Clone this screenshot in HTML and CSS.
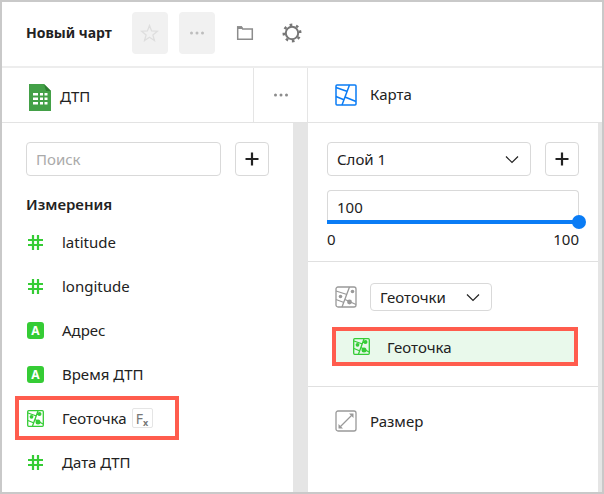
FILE: index.html
```html
<!DOCTYPE html>
<html lang="ru">
<head>
<meta charset="utf-8">
<meta name="viewport" content="width=device-width, initial-scale=1">
<title>Новый чарт</title>
<link rel="stylesheet" href="styles.css">
</head>
<body>
<svg class="defs" aria-hidden="true">
  <symbol id="hash" viewBox="0 0 17 17"><path d="M6 1v15M11 1v15M1 6h15M1 11h15" fill="none" stroke="currentColor" stroke-width="2.200"/></symbol>
  <symbol id="plus" viewBox="0 0 14 14"><path d="M7 .5v13M.5 7h13" stroke="currentColor" stroke-width="2.200"/></symbol>
  <symbol id="chevron" viewBox="0 0 14 9"><path d="M1 1.500l6 6 6-6" fill="none" stroke="currentColor" stroke-width="1.200"/></symbol>
  <symbol id="dots" viewBox="0 0 16 4"><g fill="currentColor"><circle cx="2.500" cy="2" r="1.500"/><circle cx="8" cy="2" r="1.500"/><circle cx="13.500" cy="2" r="1.500"/></g></symbol>
  <symbol id="map" viewBox="0 0 22 22"><g fill="none" stroke="currentColor" stroke-width="1.500"><rect x="1" y="1" width="20" height="20" rx="1"/><path d="M14.500 1L7 21M1 3.500l11.500 4M1 12.500l8.500 3.500M10 13l11 4.500"/></g></symbol>
  <symbol id="geo" viewBox="0 0 22 22"><g fill="none" stroke="currentColor" stroke-width="1.300"><rect x="1" y="1" width="20" height="20" rx="2"/><path d="M14.500 1L7 21M1 5l11 3.500M1 13.500l8 3M10 13.500l11 5"/></g><g fill="currentColor"><circle cx="5.500" cy="10.500" r="1.800"/><circle cx="17.500" cy="5.500" r="1.800"/><circle cx="14.500" cy="16" r="2.400"/></g></symbol>
  <symbol id="geo-small" viewBox="0 0 17 17"><g fill="none" stroke="currentColor" stroke-width="1.300"><rect x=".7" y=".7" width="15.600" height="15.600" rx="1"/><path d="M11 1L5.500 16M1 3l8.500 3M1 10.500l6 2.500M8 9.500l8 4.500M10 4l2 1"/></g><g fill="currentColor"><circle cx="4.500" cy="6.800" r="1.900"/><circle cx="12.500" cy="4" r="2"/><circle cx="11" cy="12" r="2.500"/></g></symbol>
</svg>
<div class="app">
  <header class="topbar">
    <h1 class="title">Новый чарт</h1>
    <button class="tile star" type="button" aria-label="В избранное" disabled><svg width="19" height="18" viewBox="0 0 19 18"><path d="M9.500 1.500l2.100 5.400 5.700.3-4.400 3.700 1.500 5.600-4.900-3.200-4.900 3.200 1.500-5.600-4.400-3.700 5.700-.3z" fill="none" stroke="currentColor" stroke-width="1.300"/></svg></button>
    <button class="tile more" type="button" aria-label="Ещё" disabled><svg width="16" height="4"><use href="#dots"/></svg></button>
    <button class="tool folder" type="button" aria-label="Открыть"><svg width="18" height="16" viewBox="0 0 18 16"><path d="M1.700 14.300V2h3.800l1.200 2h9.600v10.300z" fill="none" stroke="currentColor" stroke-width="1.500"/><path d="M1 1.200h4.800l1 2.800H1z" fill="currentColor"/></svg></button>
    <button class="tool gear" type="button" aria-label="Настройки"><svg width="20" height="20" viewBox="0 0 20 20"><g fill="none" stroke="currentColor"><circle cx="10" cy="10" r="6.200" stroke-width="2"/><circle cx="10" cy="10" r="8.200" stroke-width="2.600" stroke-dasharray="2.600 3.840" transform="rotate(-18 10 10)"/></g></svg></button>
  </header>
  <main class="panels">
    <section class="panel">
      <div class="head">
        <div class="source">
          <svg class="sheet" width="22" height="27" viewBox="0 0 22 27"><path d="M0 0h15l7 7v20H0z" fill="#43a047"/><path d="M15 0l7 7h-5z" fill="#2e7d32"/><path d="M4 9h5v2.500H4zM11 9h3v2.500h-3zM15.500 9h3v2.500h-3zM4 13.500h5V16H4zM11 13.500h3V16h-3zM15.500 13.500h3V16h-3zM4 18h5v2.500H4zM11 18h3v2.500h-3zM15.500 18h3v2.500h-3z" fill="#fff"/></svg>
          <h2 class="name">ДТП</h2>
        </div>
        <button class="head-more" type="button" aria-label="Меню датасета"><svg width="16" height="4"><use href="#dots"/></svg></button>
      </div>
      <div class="fields">
        <div class="controls">
          <input class="box search" type="search" placeholder="Поиск" aria-label="Поиск">
          <button class="box add" type="button" aria-label="Добавить поле"><svg width="14" height="14"><use href="#plus"/></svg></button>
        </div>
        <h3 class="group">Измерения</h3>
        <ul class="list">
          <li class="field"><svg class="icon"><use href="#hash"/></svg>latitude</li>
          <li class="field"><svg class="icon"><use href="#hash"/></svg>longitude</li>
          <li class="field"><span class="icon letter">A</span>Адрес</li>
          <li class="field"><span class="icon letter">A</span>Время ДТП</li>
          <li class="field marked"><svg class="icon"><use href="#geo-small"/></svg>Геоточка<span class="fx">F<small>x</small></span></li>
          <li class="field"><svg class="icon"><use href="#hash"/></svg>Дата ДТП</li>
        </ul>
      </div>
    </section>
    <section class="panel">
      <div class="head">
        <div class="chart-type"><svg class="map" width="22" height="22"><use href="#map"/></svg><h2 class="name">Карта</h2></div>
      </div>
      <div class="settings">
        <div class="layer">
          <div class="controls">
            <div class="picker wide">
              <select class="box" aria-label="Слой"><option>Слой 1</option></select>
              <svg class="arrow" width="14" height="9"><use href="#chevron"/></svg>
            </div>
            <button class="box add" type="button" aria-label="Добавить слой"><svg width="14" height="14"><use href="#plus"/></svg></button>
          </div>
          <div class="opacity">
            <input class="box value" type="text" value="100" aria-label="Непрозрачность">
            <input class="slider" type="range" min="0" max="100" value="100" aria-label="Непрозрачность, ползунок">
            <div class="scale"><span>0</span><span>100</span></div>
          </div>
        </div>
        <div class="slot">
          <div class="slot-head">
            <svg class="slot-icon" width="22" height="22"><use href="#geo"/></svg>
            <div class="picker">
              <select class="box small" aria-label="Тип геослоя"><option>Геоточки</option></select>
              <svg class="arrow" width="14" height="9"><use href="#chevron"/></svg>
            </div>
          </div>
          <div class="chip"><svg class="icon"><use href="#geo-small"/></svg>Геоточка</div>
        </div>
        <div class="slot">
          <div class="slot-head">
            <svg class="slot-icon" width="22" height="22" viewBox="0 0 22 22"><rect x="1" y="1" width="20" height="20" rx="2" fill="none" stroke="currentColor" stroke-width="1.300"/><path d="M5.500 16.500l11-11" stroke="currentColor" stroke-width="1.200"/><path d="M18.500 3.500v4.500L14 3.500zM3.500 18.500V14L8 18.500z" fill="currentColor"/></svg>
            <h3 class="name">Размер</h3>
          </div>
        </div>
      </div>
    </section>
  </main>
</div>
</body>
</html>
```
FILE: styles.css
```css
* { box-sizing: border-box; }

body {
  margin: 0;
  font: 15px/20px "Noto Sans", "Open Sans", sans-serif;
  color: #222;
  background: #fff;
}

h1, h2, h3, ul { margin: 0; padding: 0; }

button, input, select { font: inherit; color: inherit; margin: 0; }

svg { display: block; }

.defs { position: absolute; width: 0; height: 0; }

.app {
  display: flex;
  flex-direction: column;
  min-height: 100vh;
  border: 2px solid #c9c9c9;
}

.topbar {
  display: flex;
  align-items: center;
  padding: 10px 24px 12px;
  border-bottom: 2px solid #ededed;
}

.title {
  margin-right: 20px;
  font-size: 14px;
  white-space: nowrap;
}

.tile, .tool, .head-more {
  display: flex;
  align-items: center;
  justify-content: center;
  padding: 0;
  border: 0;
  background: none;
}

.tile {
  width: 36px;
  height: 42px;
  border-radius: 4px;
  background: #f1f1f1;
}

.star { margin-right: 11px; color: #dedede; }
.more { margin-right: 12px; color: #bdbdbd; }

.tool { width: 36px; height: 36px; }
.folder { margin-right: 11px; color: #8c8c8c; }
.gear { color: #777; }

.panels {
  flex: 1;
  display: grid;
  grid-template-columns: 51% 1fr;
}

.panel { display: flex; flex-direction: column; min-width: 0; }

.head {
  display: flex;
  height: 55px;
  border-bottom: 1px solid #e3e3e3;
}

.source {
  flex: 1;
  display: flex;
  align-items: center;
  gap: 9px;
  padding: 4px 0 0 27px;
}

.name { font-size: 15px; font-weight: 400; }

.source .name, .chart-type .name { padding-bottom: 2px; }

.head-more {
  width: 55px;
  border: solid #e5e5e5;
  border-width: 0 1px;
  color: #8c8c8c;
}

.chart-type {
  display: flex;
  align-items: center;
  gap: 13px;
  padding-left: 27px;
}

.map { color: #0a7cf5; }

.fields {
  flex: 1;
  padding-top: 19px;
  border-right: 15px solid #e5e5e5;
}

.fields .controls { padding: 0 24px; }

.controls { display: flex; gap: 14px; }

.box {
  height: 34px;
  padding: 0 9px;
  border: 1px solid #d9d9d9;
  border-radius: 4px;
  background: #fff;
  outline: 0;
  appearance: none;
}

.search { flex: 1; min-width: 0; }
.search::placeholder { color: #aaa; }

.add {
  flex: none;
  display: flex;
  align-items: center;
  justify-content: center;
  width: 34px;
  padding: 0;
}

.group {
  padding: 18px 24px 6px;
  font-size: 15px;
  font-weight: 600;
}

.list { list-style: none; }

.field {
  display: flex;
  align-items: center;
  width: fit-content;
  height: 44px;
  margin-left: 13px;
  padding-left: 12px;
}

.icon {
  flex: none;
  width: 17px;
  height: 17px;
  margin-right: 18px;
  color: #35cc35;
}

.letter {
  border-radius: 3px;
  background: #35cc35;
  color: #fff;
  font-size: 12px;
  font-weight: 700;
  line-height: 17px;
  text-align: center;
}

.marked {
  padding: 0 22px 0 8px;
  border: 4px solid #ff5c4d;
}

.fx {
  width: 21px;
  height: 20px;
  margin-left: 5px;
  border: 1px solid #e5e5e5;
  border-radius: 2px;
  color: #777;
  font-size: 14px;
  line-height: 19px;
  text-align: center;
}

.fx small { font-size: 9px; font-weight: 700; vertical-align: -2px; }

.settings {
  flex: 1;
  border-right: 4px solid #e5e5e5;
}

.layer {
  padding: 19px 19px 11px;
  border-bottom: 1px solid #e0e0e0;
}

.picker { position: relative; }
.picker select { width: 100%; }
.wide { flex: 1; }

.arrow {
  position: absolute;
  top: 50%;
  right: 12px;
  margin-top: -4px;
  pointer-events: none;
}

.opacity { margin-top: 14px; }

.value {
  display: block;
  width: 100%;
  height: 32px;
  border-bottom: 0;
  border-radius: 4px 4px 0 0;
}

.slider {
  display: block;
  width: calc(100% + 7px);
  height: 14px;
  margin: -7px 0 0;
  background: linear-gradient(#0a7cf5, #0a7cf5) no-repeat 0 5px / calc(100% - 7px) 4px;
  appearance: none;
}

.slider::-webkit-slider-thumb {
  width: 14px;
  height: 14px;
  border: 0;
  border-radius: 50%;
  background: #0a7cf5;
  appearance: none;
}

.scale {
  display: flex;
  justify-content: space-between;
}

.layer { padding-bottom: 12px; }

.slot {
  padding: 21px 20px 20px;
  border-bottom: 1px solid #e0e0e0;
}

.slot:last-child { padding-top: 23px; border-bottom: 0; }

.slot-head {
  display: flex;
  align-items: center;
  gap: 13px;
  padding-left: 7px;
}

.slot-icon { color: #999; }

.box.small { width: 122px; height: 28px; }

.chip {
  display: flex;
  align-items: center;
  height: 39px;
  margin: 16px 0 0 4px;
  padding-left: 17px;
  border: 4px solid #ff5c4d;
  background: #e9f9eb;
}

.chip .icon { margin-right: 17px; }
```
